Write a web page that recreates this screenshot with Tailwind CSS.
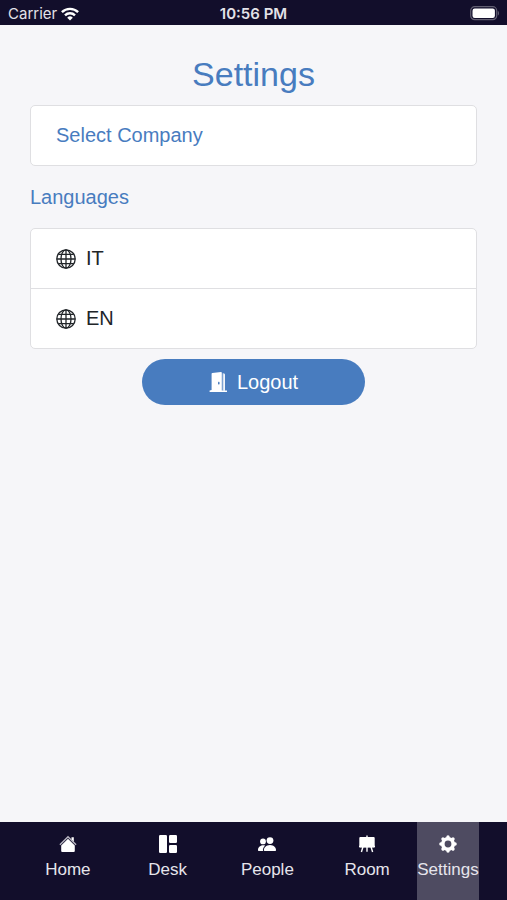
<!DOCTYPE html>
<html lang="en">
<head>
<meta charset="utf-8">
<meta name="viewport" content="width=device-width, initial-scale=1">
<title>Settings</title>
<script src="https://cdn.jsdelivr.net/npm/@tailwindcss/browser@4"></script>
</head>
<body class="flex min-h-screen flex-col bg-[#f6f6f9] font-['Liberation_Sans',Arial,sans-serif] text-[#212529]">
<svg class="hidden" aria-hidden="true">
  <symbol id="globe" viewBox="0 0 20 20">
    <g fill="none" stroke="currentColor" stroke-width="1.3">
      <circle cx="10" cy="10" r="9.2"/>
      <ellipse cx="10" cy="10" rx="5" ry="9.2"/>
      <path d="M10 .8v18.4M.8 10h18.4M2.4 5.3h15.2M2.4 14.7h15.2"/>
    </g>
  </symbol>
</svg>

<header class="grid h-[25px] shrink-0 grid-cols-3 items-center bg-[#120e2b] px-2 pt-[2px] font-[Inter,sans-serif] text-[15px] leading-5 text-[#e3e2e8]">
  <div class="flex items-center gap-1">
    <span>Carrier</span>
    <svg class="h-[14px] w-[18px]" viewBox="0 0 18 14" fill="none" stroke="#fff" stroke-width="2.4" aria-label="Wi-Fi">
      <path d="M.9 5.2a11.5 11.5 0 0 1 16.2 0M4 8.3a7.1 7.1 0 0 1 10 0"/>
      <path d="M9 13.5 6.2 10.7a4 4 0 0 1 5.6 0z" fill="#fff" stroke="none"/>
    </svg>
  </div>
  <span class="text-center font-semibold">10:56 PM</span>
  <svg class="h-[15px] w-[30px] justify-self-end" viewBox="0 0 30 15" aria-label="Battery full">
    <rect x="1.7" y=".7" width="26" height="13" rx="4" fill="none" stroke="#625f72" stroke-width="1.2"/>
    <rect x="3.5" y="2.5" width="22.4" height="9.4" rx="2.2" fill="#fff"/>
    <path d="M28.800 4.800c1.600.8 1.600 4 0 4.800z" fill="#625f72"/>
  </svg>
</header>

<main class="flex grow flex-col px-[30px] pt-[30px]">
  <h1 class="text-center text-[34px] leading-[38px] text-[#487cbf]">Settings</h1>
  <button type="button" class="mt-3 rounded-[5px] border border-[#dfdfe2] bg-white px-[25px] py-4 text-left text-xl leading-[27px] text-[#487cbf]">Select Company</button>
  <h2 class="mt-[17px] text-xl leading-7 text-[#487cbf]">Languages</h2>
  <ul class="mt-[17px] divide-y divide-[#dfdfe2] overflow-hidden rounded-[5px] border border-[#dfdfe2] bg-white text-xl leading-[27px]">
    <li><button type="button" class="flex w-full items-center gap-[10px] px-[25px] py-4"><svg class="size-5"><use href="#globe"/></svg>IT</button></li>
    <li><button type="button" class="flex w-full items-center gap-[10px] px-[25px] py-4"><svg class="size-5"><use href="#globe"/></svg>EN</button></li>
  </ul>
  <button type="button" class="mt-[10px] flex w-1/2 items-center justify-center gap-[10px] self-center rounded-full bg-[#487cbf] py-[9px] text-xl leading-7 text-white">
    <svg class="h-5 w-[18px]" viewBox="0 0 18 20" fill="#fff" aria-hidden="true">
      <path fill-rule="evenodd" d="M2.6 18V1.8Q2.6 1.1 3.3 1L12 0q.8 0 .8.8V18.500H18V20H.6V18.600zM9.8 9.8c-.5 0-.8.7-.8 1.4s.3 1.4.8 1.4.8-.6.8-1.4-.3-1.4-.8-1.400z"/>
      <path d="M13.6 1.3h.9q1.4 0 1.4 1.4v16h-2.300z" opacity=".72"/>
      <path d="M15.3 2.2v16.500" stroke="#fff" stroke-width="1"/>
    </svg>
    Logout
  </button>
</main>

<nav class="flex h-[78px] shrink-0 bg-[#120e2b] pr-7 pl-[18px] text-[17px] leading-6 text-[#e6e5ec]">
  <a href="#home" class="flex flex-1 flex-col items-center gap-1 pt-3">
    <svg class="h-5 w-[18px]" viewBox="0 0 18 20" fill="#fff" aria-hidden="true">
      <path d="m9 4.700 6.800 6.700v5.600q0 1.100-1.100 1.100H3.300q-1.100 0-1.100-1.100v-5.600z"/>
      <path d="M12.500 3.200h2.300v4.900l-2.300-2.300z"/>
      <path d="M.9 10.800 9 2.800l8.100 8" fill="none" stroke="#b5b3bf" stroke-width="1.500"/>
    </svg>
    Home
  </a>
  <a href="#desk" class="flex flex-1 flex-col items-center gap-1 pt-3">
    <svg class="h-5 w-[18px]" viewBox="0 0 18 20" fill="#fff" aria-hidden="true">
      <rect x="0" y="1" width="8" height="18" rx="1.2"/>
      <rect x="10" y="1" width="8" height="8" rx="1.2"/>
      <rect x="10" y="11" width="8" height="8" rx="1.2"/>
    </svg>
    Desk
  </a>
  <a href="#people" class="flex flex-1 flex-col items-center gap-1 pt-3">
    <svg class="h-5 w-[18px]" viewBox="0 0 18 20" fill="#fff" aria-hidden="true">
      <circle cx="12" cy="6.6" r="3.4"/>
      <path d="M7 17c-.8 0-1.100-.4-1.100-1.100 0-1.900 2-4.900 6.100-4.900s6 3 6 4.900c0 .7-.3 1.100-1 1.100z"/>
      <circle cx="5" cy="7.400" r="2.900"/>
      <path d="M5.200 17c-.4-.6-.4-1.200-.2-2 .3-1.300 1-2.500 2.100-3.500-4.500-1.200-7.100 1.900-7.100 4.400 0 .7.300 1.100 1 1.100z"/>
    </svg>
    People
  </a>
  <a href="#room" class="flex flex-1 flex-col items-center gap-1 pt-3">
    <svg class="h-5 w-[18px]" viewBox="0 0 18 20" fill="#fff" aria-hidden="true">
      <rect x="1.300" y="3" width="15.400" height="10.500" rx="1"/>
      <path d="M1 12.500h16M9 1.500v16.300M4.900 13l-1.500 5M13.100 13l1.500 5" fill="none" stroke="#fff" stroke-width="1.400"/>
    </svg>
    Room
  </a>
  <a href="#settings" aria-current="page" class="flex w-[62px] flex-col items-center gap-1 bg-[#4e4b61] pt-3">
    <svg class="h-5 w-[18px]" viewBox="0 0 18 20" aria-hidden="true">
      <circle cx="9" cy="10" r="5.200" fill="none" stroke="#fff" stroke-width="3.600"/>
      <g stroke="#fff" stroke-width="3.400" stroke-linecap="round">
        <path d="M9 2.900v1.500M9 15.600v1.500M1.900 10h1.500M14.600 10h1.500M4 5l1 1M13 14l1 1M4 15l1-1M13 6l1-1"/>
      </g>
    </svg>
    Settings
  </a>
</nav>
</body>
</html>
